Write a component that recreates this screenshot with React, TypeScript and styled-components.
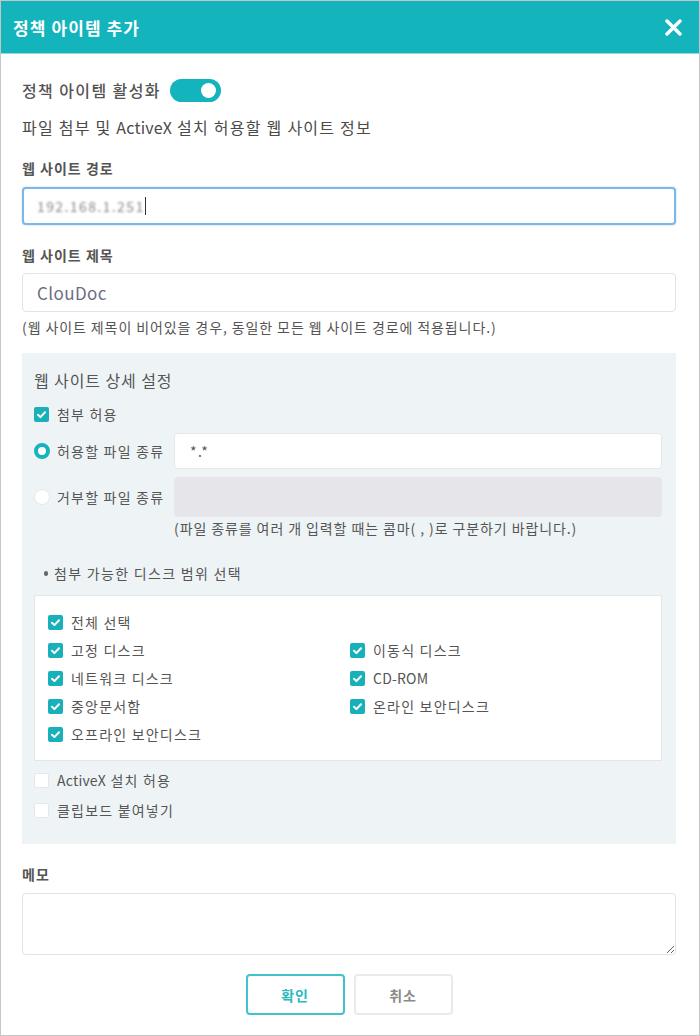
import React from "react";
import styled, { createGlobalStyle } from "styled-components";

const FONT = `"Noto Sans CJK KR", "Noto Sans", sans-serif`;
const TEAL = "#14b4bc";

const Global = createGlobalStyle`
  html, body { margin: 0; padding: 0; background: #fff; }
  body { font-family: ${FONT}; }
  * { box-sizing: border-box; }
`;

const Dialog = styled.div`
  width: 700px;
  height: 1036px;
  border: 1px solid #c6c6c6;
  background: #fff;
  display: flex;
  flex-direction: column;
`;

const Header = styled.div`
  height: 53px;
  flex: none;
  background: ${TEAL};
  border-bottom: 1px solid #8fd9dd;
  display: flex;
  align-items: center;
  justify-content: space-between;
  padding: 0 17px 0 12px;
`;

const Title = styled.div`
  color: #fff;
  font-size: 17px;
  font-weight: 700;
  letter-spacing: 1.1px;
`;

const Body = styled.div`
  padding: 0 23px 0 21px;
  display: flex;
  flex-direction: column;
`;

const ToggleRow = styled.div`
  margin-top: 24px;
  height: 24px;
  display: flex;
  align-items: center;
  gap: 9px;
`;

const BigLabel = styled.span`
  font-size: 16px;
  font-weight: 500;
  color: #555;
  letter-spacing: 1.4px;
`;

const Toggle = styled.div`
  width: 51px;
  height: 23px;
  border-radius: 12px;
  background: ${TEAL};
  position: relative;
  &::after {
    content: "";
    position: absolute;
    right: 5px;
    top: 4px;
    width: 15px;
    height: 15px;
    border-radius: 50%;
    background: #fff;
  }
`;

const Subtitle = styled.div`
  margin-top: 14px;
  line-height: 22px;
  font-size: 16px;
  color: #4a4a4a;
  letter-spacing: 1.25px;
`;

const FieldLabel = styled.div<{ $mt: number }>`
  margin-top: ${(p) => p.$mt}px;
  line-height: 20px;
  font-size: 14px;
  font-weight: 700;
  color: #555;
  letter-spacing: 1px;
`;

const TextBox = styled.div<{ $focus?: boolean; $mt: number; $h: number }>`
  margin-top: ${(p) => p.$mt}px;
  height: ${(p) => p.$h}px;
  border: ${(p) => (p.$focus ? "2px solid #7db6ea" : "1px solid #e2e2ea")};
  border-radius: 4px;
  background: #fff;
  display: flex;
  align-items: center;
  padding-left: ${(p) => (p.$focus ? 13 : 14)}px;
  font-size: 17px;
  color: #6c6c84;
  letter-spacing: 0.4px;
  box-shadow: ${(p) => (p.$focus ? "0 0 2px rgba(125,182,234,0.6)" : "none")};
`;

const Blurred = styled.span`
  font-size: 14px;
  color: #8a8a8a;
  filter: blur(1.3px);
  letter-spacing: 1.4px;
`;

const Caret = styled.span`
  width: 1px;
  height: 18px;
  background: #333;
`;

const Note = styled.div`
  margin-top: 5px;
  line-height: 20px;
  font-size: 14px;
  color: #555;
  letter-spacing: 0.9px;
`;

const Panel = styled.div`
  margin-top: 16px;
  background: #eef4f5;
  padding: 16px 14px 19px 12px;
  display: flex;
  flex-direction: column;
`;

const PanelTitle = styled.div`
  line-height: 22px;
  font-size: 16px;
  color: #555;
  letter-spacing: 0.9px;
`;

const CheckRow = styled.label<{ $h: number; $mt?: number }>`
  display: flex;
  align-items: center;
  gap: 8px;
  height: ${(p) => p.$h}px;
  margin-top: ${(p) => p.$mt ?? 0}px;
  font-size: 14px;
  color: #555;
  letter-spacing: 1.2px;
`;

const Latin = styled.span`
  letter-spacing: 0.2px;
`;

const Box = styled.span<{ $on: boolean }>`
  width: 15px;
  height: 15px;
  flex: none;
  border-radius: 2px;
  background: ${(p) => (p.$on ? "#18b1b9" : "#fff")};
  border: ${(p) => (p.$on ? "none" : "1px solid #e4e8ea")};
  display: flex;
  align-items: center;
  justify-content: center;
`;

const Check = ({ on }: { on: boolean }) => (
  <Box $on={on}>
    {on && (
      <svg width="11" height="11" viewBox="0 0 11 11">
        <path d="M2 5.8 L4.4 8.1 L9 3.2" fill="none" stroke="#fff" strokeWidth="2" strokeLinecap="round" strokeLinejoin="round" />
      </svg>
    )}
  </Box>
);

const RadioRow = styled.div<{ $mt: number }>`
  margin-top: ${(p) => p.$mt}px;
  display: flex;
  align-items: center;
`;

const RadioLabel = styled.div`
  width: 140px;
  flex: none;
  display: flex;
  align-items: center;
  gap: 7px;
  font-size: 14px;
  color: #555;
  letter-spacing: 1.2px;
`;

const Radio = styled.span<{ $on: boolean }>`
  width: 16px;
  height: 16px;
  border-radius: 50%;
  flex: none;
  background: #fff;
  border: ${(p) => (p.$on ? `4px solid ${TEAL}` : "1px solid #e6e8ea")};
`;

const TypeInput = styled.div<{ $disabled?: boolean; $h: number }>`
  flex: 1;
  height: ${(p) => p.$h}px;
  border-radius: 4px;
  background: ${(p) => (p.$disabled ? "#e6e6ea" : "#fff")};
  border: 1px solid ${(p) => (p.$disabled ? "#e6e6ea" : "#e6e8ec")};
  display: flex;
  align-items: center;
  padding-left: 15px;
  font-size: 14px;
  color: #555;
  letter-spacing: 1.5px;
`;

const Hint = styled.div`
  margin-top: 2px;
  padding-left: 140px;
  line-height: 18px;
  font-size: 14px;
  color: #555;
  letter-spacing: 0.9px;
`;

const Bullet = styled.div`
  margin-top: 26px;
  padding-left: 10px;
  line-height: 20px;
  font-size: 14px;
  color: #555;
  letter-spacing: 1.3px;
  display: flex;
  align-items: center;
  gap: 6px;
  &::before {
    content: "";
    width: 4px;
    height: 5px;
    border-radius: 2px;
    background: #666;
  }
`;

const DiskBox = styled.div`
  margin-top: 12px;
  background: #fff;
  border: 1px solid #e2e6e8;
  padding: 12px 0 12px 13px;
  display: grid;
  grid-template-columns: 302px 1fr;
`;

const Full = styled.div`
  grid-column: 1 / -1;
`;

const Memo = styled.textarea`
  margin-top: 9px;
  height: 62px;
  border: 1px solid #e2e2ea;
  border-radius: 4px;
  resize: vertical;
  font-family: ${FONT};
  outline: none;
`;

const Buttons = styled.div`
  margin-top: 19px;
  display: flex;
  justify-content: center;
  gap: 9px;
`;

const Button = styled.button<{ $primary?: boolean }>`
  width: 99px;
  height: 41px;
  border-radius: 4px;
  background: #fff;
  border: 2px solid ${(p) => (p.$primary ? "#3ec4ca" : "#e9e9ee")};
  color: ${(p) => (p.$primary ? "#2bb8bf" : "#8a8a8a")};
  font-family: ${FONT};
  font-size: 14px;
  font-weight: 700;
  letter-spacing: 0.8px;
`;

const disks: [string, React.ReactNode | null][] = [
  ["고정 디스크", "이동식 디스크"],
  ["네트워크 디스크", <Latin>CD-ROM</Latin>],
  ["중앙문서함", "온라인 보안디스크"],
  ["오프라인 보안디스크", null],
];

export default function App() {
  return (
    <>
      <Global />
      <Dialog>
        <Header>
          <Title>정책 아이템 추가</Title>
          <svg width="17" height="17" viewBox="0 0 17 17">
            <path d="M2 2 L15 15 M15 2 L2 15" stroke="#fff" strokeWidth="3.4" strokeLinecap="round" />
          </svg>
        </Header>
        <Body>
          <ToggleRow>
            <BigLabel>정책 아이템 활성화</BigLabel>
            <Toggle />
          </ToggleRow>
          <Subtitle>
            파일 첨부 및 <Latin>ActiveX</Latin> 설치 허용할 웹 사이트 정보
          </Subtitle>
          <FieldLabel $mt={20}>웹 사이트 경로</FieldLabel>
          <TextBox $focus $mt={9} $h={38}>
            <Blurred>192.168.1.251</Blurred>
            <Caret />
          </TextBox>
          <FieldLabel $mt={20}>웹 사이트 제목</FieldLabel>
          <TextBox $mt={8} $h={39}>ClouDoc</TextBox>
          <Note>(웹 사이트 제목이 비어있을 경우, 동일한 모든 웹 사이트 경로에 적용됩니다.)</Note>
          <Panel>
            <PanelTitle>웹 사이트 상세 설정</PanelTitle>
            <CheckRow $h={20} $mt={13}>
              <Check on />
              첨부 허용
            </CheckRow>
            <RadioRow $mt={9}>
              <RadioLabel>
                <Radio $on />
                허용할 파일 종류
              </RadioLabel>
              <TypeInput $h={36}>*.*</TypeInput>
            </RadioRow>
            <RadioRow $mt={8}>
              <RadioLabel>
                <Radio $on={false} />
                거부할 파일 종류
              </RadioLabel>
              <TypeInput $disabled $h={40} />
            </RadioRow>
            <Hint>(파일 종류를 여러 개 입력할 때는 콤마( , )로 구분하기 바랍니다.)</Hint>
            <Bullet>첨부 가능한 디스크 범위 선택</Bullet>
            <DiskBox>
              <Full>
                <CheckRow $h={28}>
                  <Check on />
                  전체 선택
                </CheckRow>
              </Full>
              {disks.map(([a, b]) => (
                <React.Fragment key={a}>
                  <CheckRow $h={28}>
                    <Check on />
                    {a}
                  </CheckRow>
                  {b ? (
                    <CheckRow $h={28}>
                      <Check on />
                      {b}
                    </CheckRow>
                  ) : (
                    <div />
                  )}
                </React.Fragment>
              ))}
            </DiskBox>
            <CheckRow $h={30} $mt={4}>
              <Check on={false} />
              <span>
                <Latin>ActiveX</Latin> 설치 허용
              </span>
            </CheckRow>
            <CheckRow $h={30}>
              <Check on={false} />
              클립보드 붙여넣기
            </CheckRow>
          </Panel>
          <FieldLabel $mt={20}>메모</FieldLabel>
          <Memo />
          <Buttons>
            <Button $primary>확인</Button>
            <Button>취소</Button>
          </Buttons>
        </Body>
      </Dialog>
    </>
  );
}
